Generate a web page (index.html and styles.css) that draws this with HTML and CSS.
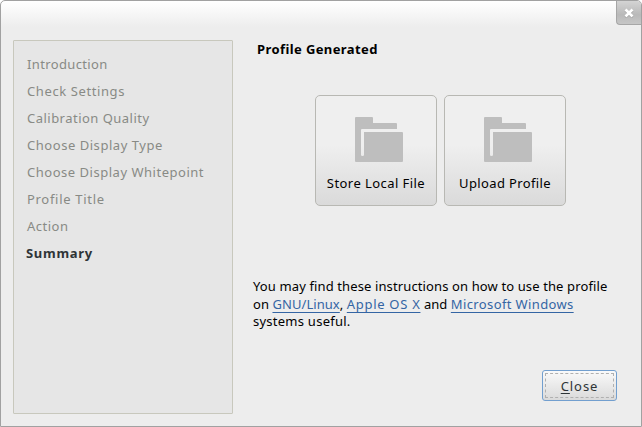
FILE: index.html
```
<!DOCTYPE html>
<html lang="en">
<head>
<meta charset="utf-8">
<title>Profile Generated</title>
<link rel="stylesheet" href="styles.css">
</head>
<body>
<div class="window">
  <button class="window-close" aria-label="Close window"><svg width="10" height="10" viewBox="0 0 10 10"><path class="shade" d="M1.5 2.3L8.5 9.3M8.5 2.3L1.5 9.3"/><path d="M1.5 1.5L8.5 8.5M8.5 1.5L1.5 8.5"/></svg></button>
  <ul class="steps">
    <li><span class="s1">Introduction</span></li>
    <li><span class="s2">Check Settings</span></li>
    <li><span class="s3">Calibration Quality</span></li>
    <li><span class="s4">Choose Display Type</span></li>
    <li><span class="s5">Choose Display Whitepoint</span></li>
    <li><span class="s6">Profile Title</span></li>
    <li><span class="s7">Action</span></li>
    <li class="current"><span>Summary</span></li>
  </ul>
  <main class="page">
    <h1>Profile Generated</h1>
    <div class="choices">
      <button class="choice"><svg width="48" height="45" viewBox="0 0 48 45"><path d="M1 0H17Q18 0 18 1V6H41Q42 6 42 7V12H7Q6 12 6 13V38Q6 39 7.5 39T9 38V15H47Q48 15 48 16V44Q48 45 47 45H1Q0 45 0 44V1Q0 0 1 0Z"/></svg><span class="store">Store Local File</span></button>
      <button class="choice"><svg width="48" height="45" viewBox="0 0 48 45"><path d="M1 0H17Q18 0 18 1V6H41Q42 6 42 7V12H7Q6 12 6 13V38Q6 39 7.5 39T9 38V15H47Q48 15 48 16V44Q48 45 47 45H1Q0 45 0 44V1Q0 0 1 0Z"/></svg><span class="upload">Upload Profile</span></button>
    </div>
    <p class="help"><span class="l1">You may find these instructions on how to use the profile</span><br><span class="l2">on <a>GNU/Linux</a>, <a class="apple">Apple OS X</a> and <a class="ms">Microsoft Windows</a></span><br><span class="l3">systems useful.</span></p>
    <button class="close"><span class="focus"><u>C</u>lose</span></button>
  </main>
</div>
</body>
</html>
```
FILE: styles.css
```
* { box-sizing: border-box; }
body {
  margin: 0;
  background: #fff;
  font: 13px "Noto Sans", "Open Sans", sans-serif;
  color: #000;
}
button { font: inherit; margin: 0; }
.window {
  position: relative;
  width: 642px;
  height: 427px;
  padding: 39px 24px 12px 12px;
  display: flex;
  gap: 20px;
  border: 1px solid #a1a1a1;
  border-radius: 5px 5px 0 0;
  background: linear-gradient(#fff, #ededed 26px);
  overflow: hidden;
  white-space: nowrap;
}
.window-close {
  position: absolute;
  top: 0;
  right: 0;
  width: 25px;
  height: 24px;
  padding: 1px 0 0;
  border: 1px solid #a6a6a6;
  border-width: 0 0 1px 1px;
  border-radius: 0 0 0 4px;
  background: linear-gradient(#d4d4d4, #b9b9b9 60%, #c6c6c6);
  display: flex;
  align-items: center;
  justify-content: center;
}
.window-close path { fill: none; stroke: #fff; stroke-width: 2.6; }
.window-close .shade { stroke: #989898; }
.steps {
  width: 220px;
  height: 374px;
  margin: 0;
  padding: 10px 13px;
  list-style: none;
  border: 1px solid #c8c8bd;
  border-radius: 1px;
  background: #e6e6e6;
  color: #888a85;
}
.steps li { height: 27px; line-height: 27px; }
.steps .current { margin-left: -1px; color: #2e3436; font-weight: 700; letter-spacing: .7px; }
.s1 { letter-spacing: .36px; }
.s2 { letter-spacing: .6px; }
.s3 { letter-spacing: .48px; }
.s4 { letter-spacing: .54px; }
.s5 { letter-spacing: .52px; }
.s6 { letter-spacing: .7px; }
.s7 { letter-spacing: .5px; }
.page { flex: 1; display: flex; flex-direction: column; }
h1 {
  margin: 0 0 0 4px;
  height: 18px;
  font-size: 13px;
  line-height: 18px;
  font-weight: 700;
  letter-spacing: .4px;
}
.choices { display: flex; gap: 7px; margin: 37px 0 0 62px; }
.choice {
  width: 122px;
  height: 111px;
  padding: 21px 0 0;
  display: flex;
  flex-direction: column;
  align-items: center;
  border: 1px solid #b8b8b3;
  border-radius: 5px;
  background: linear-gradient(#efefef 45%, #dadada);
  color: #000;
}
.choice svg { margin-left: 6px; fill: #bebebe; }
.choice span { margin-top: 12px; line-height: 18px; }
.store { letter-spacing: .44px; }
.upload { letter-spacing: .36px; }
.help { margin: 72px 0 0; line-height: 17.5px; height: 53px; }
.l1 { letter-spacing: .12px; }
.l2 { letter-spacing: .06px; }
.l3 { letter-spacing: .25px; }
.help a {
  color: #3465a4;
  text-decoration: underline 1px;
  text-underline-offset: 3px;
  text-decoration-skip-ink: none;
}
.apple { letter-spacing: .7px; }
.ms { letter-spacing: .37px; }
.close {
  align-self: flex-end;
  width: 75px;
  height: 31px;
  margin-top: 39px;
  padding: 2px;
  border: 1px solid #729fcf;
  border-radius: 3px;
  background: linear-gradient(#fafafa, #dadada);
  color: #2e3436;
}
.focus {
  display: block;
  height: 25px;
  line-height: 24px;
  border: 1px dashed #b0b0b0;
  letter-spacing: .9px;
}
.focus u { text-decoration-thickness: 1px; text-underline-offset: 2px; }
```
